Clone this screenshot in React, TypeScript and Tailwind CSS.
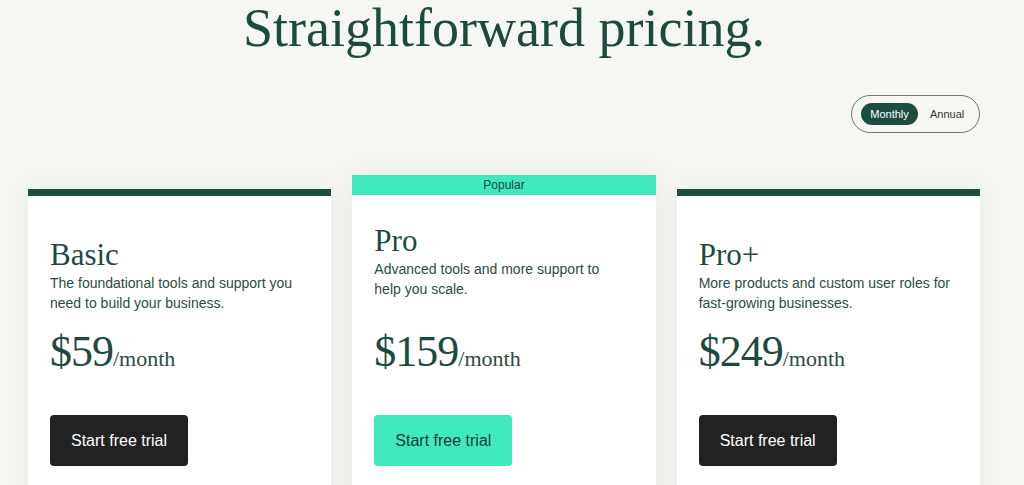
import { useState } from "react";

interface Plan {
	name: string;
	desc: string[];
	price: string;
	popular?: boolean;
}

const plans: Plan[] = [
	{
		name: "Basic",
		desc: ["The foundational tools and support you", "need to build your business."],
		price: "$59",
	},
	{
		name: "Pro",
		desc: ["Advanced tools and more support to", "help you scale."],
		price: "$159",
		popular: true,
	},
	{
		name: "Pro+",
		desc: ["More products and custom user roles for", "fast-growing businesses."],
		price: "$249",
	},
];

const serif = "font-['Liberation_Serif',serif]";
const sans = "font-['Liberation_Sans',Arial,sans-serif]";

const PlanCard = ({ plan }: { plan: Plan }) => {
	return (
		<div
			className={`flex flex-col bg-white shadow-[0_0_24px_rgba(30,50,40,0.07)] h-[340px] ${
				plan.popular ? "" : "mt-[14px]"
			}`}
		>
			{plan.popular ? (
				<div className={`h-[20px] bg-[#40e9bd] text-[#1d4a3f] text-[12px] leading-[20px] text-center ${sans}`}>
					Popular
				</div>
			) : (
				<div className="h-[7px] bg-[#1d4d40]" />
			)}
			<div className="px-[22px]">
				<div className={plan.popular ? "h-[135px] pt-[27px]" : "h-[134px] pt-[40px]"}>
					<h2 className={`${serif} text-[31px] leading-[1.2] text-[#1d4a3f]`}>{plan.name}</h2>
					<p className={`${sans} text-[14px] leading-[20px] text-[#2c4c42]`}>
						{plan.desc[0]}
						<br />
						{plan.desc[1]}
					</p>
				</div>
				<div className={`${serif} flex items-baseline text-[#1d4a3f]`}>
					<span className="text-[44px] leading-none tracking-[-1px]">{plan.price}</span>
					<span className="text-[22px] leading-none text-[#2c4c42]">/month</span>
				</div>
				<button
					className={`${sans} mt-[41px] w-[138px] h-[51px] rounded-[4px] text-[16px] ${
						plan.popular ? "bg-[#40e9bd] text-[#1d3b34]" : "bg-[#222222] text-white"
					}`}
				>
					Start free trial
				</button>
			</div>
		</div>
	);
};

const App = () => {
	const [annual, setAnnual] = useState(false);

	return (
		<div className="h-[485px] overflow-hidden bg-[#f6f7f2]">
			<div className="w-[952px] ml-[28px]">
				<h1 className={`${serif} text-[54px] leading-[56px] text-center text-[#1d4a3f]`}>
					Straightforward pricing.
				</h1>
				<div className="flex justify-end mt-[39px]">
					<div
						className={`${sans} flex items-center w-[129px] h-[38px] rounded-full border border-[#6a7a74] pl-[9px] text-[11px]`}
					>
						<button
							onClick={() => setAnnual(false)}
							className={`h-[22px] w-[57px] rounded-full ${
								annual ? "text-[#2c3a35]" : "bg-[#1d4d40] text-white"
							}`}
						>
							Monthly
						</button>
						<button
							onClick={() => setAnnual(true)}
							className={`ml-[12px] h-[22px] ${annual ? "rounded-full bg-[#1d4d40] text-white px-2" : "text-[#2c3a35]"}`}
						>
							Annual
						</button>
					</div>
				</div>
				<div className="grid grid-cols-3 gap-[21px] items-start mt-[42px]">
					{plans.map((plan) => (
						<PlanCard key={plan.name} plan={plan} />
					))}
				</div>
			</div>
		</div>
	);
};

export default App;
